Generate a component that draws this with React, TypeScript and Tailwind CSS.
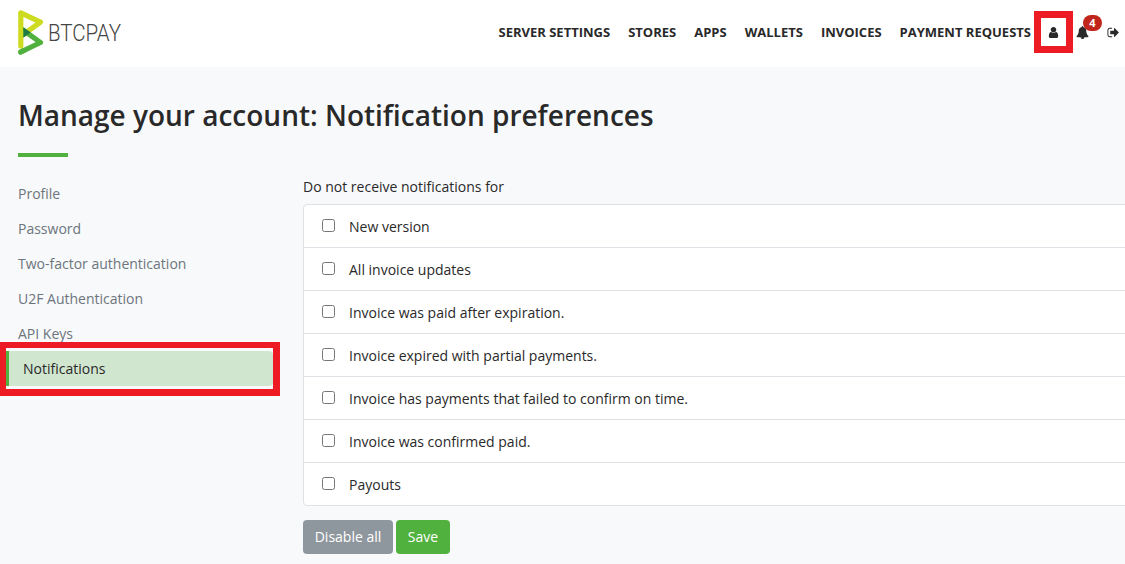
import React from "react";

const navLinks = ["SERVER SETTINGS", "STORES", "APPS", "WALLETS", "INVOICES", "PAYMENT REQUESTS"];
const sections = ["Profile", "Password", "Two-factor authentication", "U2F Authentication", "API Keys"];
const events = [
  "New version",
  "All invoice updates",
  "Invoice was paid after expiration.",
  "Invoice expired with partial payments.",
  "Invoice has payments that failed to confirm on time.",
  "Invoice was confirmed paid.",
  "Payouts",
];

function Logo() {
  return (
    <svg className="block h-[46px] w-[112px] overflow-visible" viewBox="0 0 112 46" role="img" aria-label="BTCPAY">
      <g fill="none" strokeWidth="5.2" strokeLinecap="round" strokeLinejoin="round">
        <path d="M2.8 43 22.5 33.5 5.5 21.3" stroke="#51b13e" />
        <path d="M2.8 37V3.8L22.5 13.2 5.5 25.4" stroke="#cedc21" />
        <path d="M2.8 43 6 41.4" stroke="#51b13e" />
      </g>
      <path d="M5.3 18.3v10.4l7.6-5.3z" fill="#1e7a44" />
      <text x="30" y="32" textLength="73" lengthAdjust="spacingAndGlyphs" fontSize="23" fill="#444444" className="font-['Roboto',sans-serif] font-light">
        BTCPAY
      </text>
    </svg>
  );
}

function Icon({ d, className }: { d: string; className: string }) {
  return (
    <svg className={`block shrink-0 ${className}`} viewBox="0 0 1792 1792" fill="currentColor" aria-hidden="true">
      <path d={d} />
    </svg>
  );
}

const userPath =
  "M1536 1399q0 109-62.5 187t-150.5 78h-854q-88 0-150.5-78t-62.5-187q0-85 8.5-160.5t31.5-152 58.5-131 94-89 134.5-34.5q131 128 313 128t313-128q76 0 134.5 34.5t94 89 58.5 131 31.5 152 8.5 160.5zm-256-887q0 159-112.5 271.5t-271.5 112.5-271.5-112.5-112.5-271.5 112.5-271.5 271.5-112.5 271.5 112.5 112.5 271.5z";
const bellPath =
  "M912 1696q0-16-16-16-59 0-101.5-42.5t-42.5-101.5q0-16-16-16t-16 16q0 73 51.5 124.5t124.5 51.5q16 0 16-16zm816-288q0 52-38 90t-90 38h-448q0 106-75 181t-181 75-181-75-75-181h-448q-52 0-90-38t-38-90q50-42 91-88t85-119.5 74.5-158.5 50-206 19.5-260q0-152 117-282.5t307-158.5q-8-19-8-39 0-40 28-68t68-28 68 28 28 68q0 20-8 39 190 28 307 158.5t117 282.5q0 139 19.5 260t50 206 74.5 158.5 85 119.5 91 88z";
const signOutPath =
  "M704 1440q0 4 1 20t.5 26.5-3 23.5-10 19.5-20.5 6.5h-320q-119 0-203.5-84.5t-84.5-203.5v-704q0-119 84.5-203.5t203.5-84.5h320q13 0 22.5 9.5t9.5 22.5q0 4 1 20t.5 26.5-3 23.5-10 19.5-20.5 6.5h-320q-66 0-113 47t-47 113v704q0 66 47 113t113 47h312l11.5 1 11.5 3 8 5.5 7 9 2 13.5zm928-544q0 26-19 45l-544 544q-19 19-45 19t-45-19-19-45v-288h-448q-26 0-45-19t-19-45v-384q0-26 19-45t45-19h448v-288q0-26 19-45t45-19 45 19l544 544q19 19 19 45z";

function Header() {
  return (
    <header className="flex h-[67px] items-start justify-between bg-white pl-[18px]">
      <a href="#" className="mt-[9px]"><Logo /></a>
      <nav className="flex h-16 shrink-0 items-center text-[13px] font-bold whitespace-nowrap">
        <div className="flex gap-[18px]">
          {navLinks.map((label) => <a key={label} href="#">{label}</a>)}
        </div>
        <a href="#" className="ml-[3px] flex h-[42px] w-[39px] items-center justify-center border-[7px] border-[#ed1c24]" aria-label="Account">
          <Icon d={userPath} className="size-[13px]" />
        </a>
        <a href="#" className="relative ml-[3px]" aria-label="Notifications">
          <Icon d={bellPath} className="size-[13px]" />
          <span className="absolute -top-[11px] left-[7px] flex h-4 w-[19px] items-center justify-center rounded-full bg-[#c0261b] text-[11px] leading-none text-white">4</span>
        </a>
        <a href="#" className="mr-[5px] ml-[18px]" aria-label="Sign out">
          <Icon d={signOutPath} className="size-[13px]" />
        </a>
      </nav>
    </header>
  );
}

export default function App() {
  return (
    <div className="flex h-[564px] w-full flex-col overflow-hidden bg-[#f8f9fb] font-['Open_Sans',sans-serif] text-sm text-[#292929]">
      <Header />
      <main className="flex flex-col">
        <h1 className="mt-[29px] ml-[18px] text-[28px] leading-[38px] font-semibold">Manage your account: Notification preferences</h1>
        <div className="mt-[19px] ml-[18px] h-1 w-[50px] bg-[#51b13e]" />
        <div className="mt-[19px] flex">
          <aside className="w-[303px] shrink-0">
            <nav className="flex flex-col">
              {sections.map((label) => (
                <a key={label} href="#" className="flex h-[35px] items-center pl-[18px] text-[#6c757d]">{label}</a>
              ))}
              <div className="-mt-[9px] h-[54px] w-[280px] border-[6px] border-r-[7px] border-b-[7px] border-[#ed1c24] pt-[3px]">
                <a href="#" className="flex h-[35px] items-center rounded-r border-l-[3px] border-[#51b13e] bg-[#d1e6cf] pl-[14px]">Notifications</a>
              </div>
            </nav>
          </aside>
          <section className="w-[840px] shrink-0">
            <div className="h-[28px] leading-[21px]">Do not receive notifications for</div>
            <ul className="divide-y divide-[#dee2e6] rounded border border-[#dee2e6] bg-white">
              {events.map((label) => (
                <li key={label} className="h-[43px] last:h-[42px]">
                  <label className="flex h-[42px] items-center pl-[18px]">
                    <input type="checkbox" className="-mt-[2px] mr-[14px] size-[13px] shrink-0" />
                    <span className="mt-px">{label}</span>
                  </label>
                </li>
              ))}
            </ul>
            <div className="mt-[14px] flex gap-[3px] text-white">
              <button type="button" className="h-[34px] w-[90px] rounded bg-[#8f979e]">Disable all</button>
              <button type="button" className="h-[34px] w-[54px] rounded bg-[#51b13e]">Save</button>
            </div>
          </section>
        </div>
      </main>
    </div>
  );
}
